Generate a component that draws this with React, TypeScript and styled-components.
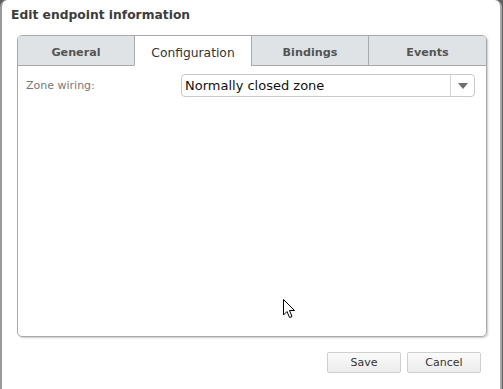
import React, { useState } from "react";
import styled, { createGlobalStyle } from "styled-components";

const Global = createGlobalStyle`
  html, body { margin: 0; padding: 0; background: #5f5f5f; overflow: hidden; }
  body { font-family: "DejaVu Sans", Verdana, sans-serif; }
`;

const Dialog = styled.div`
  box-sizing: border-box;
  width: 502px;
  height: 395px;
  background: #ffffff;
  border-left: 2px solid #9a9a9a;
  border-right: 2px solid #a8a8a8;
  border-top-left-radius: 7px;
  border-top-right-radius: 7px;
  display: flex;
  flex-direction: column;
  position: relative;
`;

const Title = styled.div`
  height: 35px;
  box-sizing: border-box;
  padding: 8px 0 0 9px;
  font-family: "DejaVu Sans", Verdana, sans-serif;
  font-weight: bold;
  font-size: 12.3px;
  color: #3c3c3c;
`;

const Panel = styled.div`
  box-sizing: border-box;
  margin-left: 15px;
  width: 470px;
  height: 302px;
  border: 1px solid #a9a9a9;
  border-radius: 5px;
  box-shadow: 1px 1px 2px rgba(0, 0, 0, 0.22);
  overflow: hidden;
  display: flex;
  flex-direction: column;
`;

const TabRow = styled.div`
  display: flex;
  height: 30px;
`;

const Tab = styled.div<{ $active: boolean; $first?: boolean }>`
  box-sizing: border-box;
  flex: 0 0 ${(p) => (p.$first ? "116px" : "117px")};
  display: flex;
  align-items: center;
  justify-content: center;
  padding-top: 4px;
  background: ${(p) => (p.$active ? "#ffffff" : "#dfe3e6")};
  border-left: ${(p) => (p.$first ? "none" : "1px solid #a9a9a9")};
  border-bottom: ${(p) => (p.$active ? "1px solid transparent" : "1px solid #a9a9a9")};
  font-family: "DejaVu Sans", Verdana, sans-serif;
  font-size: ${(p) => (p.$active ? "12.3px" : "11.2px")};
  font-weight: ${(p) => (p.$active ? "normal" : "bold")};
  color: ${(p) => (p.$active ? "#333" : "#555")};
  cursor: default;
  &:last-child { flex: 1 1 auto; }
`;

const Body = styled.div`
  flex: 1;
  padding: 8px 10px 0 8px;
  display: grid;
  grid-template-columns: 155px 294px;
  align-content: start;
  align-items: center;
`;

const Label = styled.label`
  font-family: "DejaVu Sans", Verdana, sans-serif;
  font-size: 11px;
  color: #777;
`;

const Select = styled.div`
  box-sizing: border-box;
  height: 23px;
  border: 1px solid #c9c9c9;
  border-radius: 4px;
  display: flex;
  align-items: stretch;
  background: #fff;
`;

const SelectText = styled.div`
  flex: 1;
  display: flex;
  align-items: center;
  padding-left: 3px;
  font-family: "DejaVu Sans", Verdana, sans-serif;
  font-size: 13px;
  color: #111;
`;

const Arrow = styled.div`
  width: 23px;
  border-left: 1px solid #d4d4d4;
  display: flex;
  align-items: center;
  justify-content: center;
  &::after {
    content: "";
    border-left: 5px solid transparent;
    border-right: 5px solid transparent;
    border-top: 6px solid #6e6e6e;
    margin-top: 1px;
  }
`;

const Footer = styled.div`
  display: flex;
  justify-content: flex-end;
  gap: 6px;
  padding: 15px 19px 0 0;
`;

const Button = styled.button`
  box-sizing: border-box;
  width: 74px;
  height: 21px;
  border: 1px solid #cfcfcf;
  border-radius: 2px;
  background: linear-gradient(#fbfbfb, #ececec);
  font-family: "DejaVu Sans", Verdana, sans-serif;
  font-size: 11px;
  color: #333;
  padding: 0;
`;

const Cursor = styled.svg`
  position: absolute;
  left: 281px;
  top: 299px;
`;

const tabs = ["General", "Configuration", "Bindings", "Events"];

export default function App() {
  const [active, setActive] = useState(1);
  return (
    <>
      <Global />
      <Dialog>
        <Title>Edit endpoint information</Title>
        <Panel>
          <TabRow>
            {tabs.map((t, i) => (
              <Tab key={t} $active={i === active} $first={i === 0} onClick={() => setActive(i)}>
                {t}
              </Tab>
            ))}
          </TabRow>
          <Body>
            <Label>Zone wiring:</Label>
            <Select>
              <SelectText>Normally closed zone</SelectText>
              <Arrow />
            </Select>
          </Body>
        </Panel>
        <Footer>
          <Button>Save</Button>
          <Button>Cancel</Button>
        </Footer>
        <Cursor width="13" height="20" viewBox="0 0 13 20">
          <path d="M0.5 0.5 L0.5 16 L4 12.5 L6.5 18.5 L9 17.5 L6.5 11.5 L11.5 11.5 Z" fill="#fff" stroke="#000" strokeWidth="1" strokeLinejoin="miter" />
        </Cursor>
      </Dialog>
    </>
  );
}
